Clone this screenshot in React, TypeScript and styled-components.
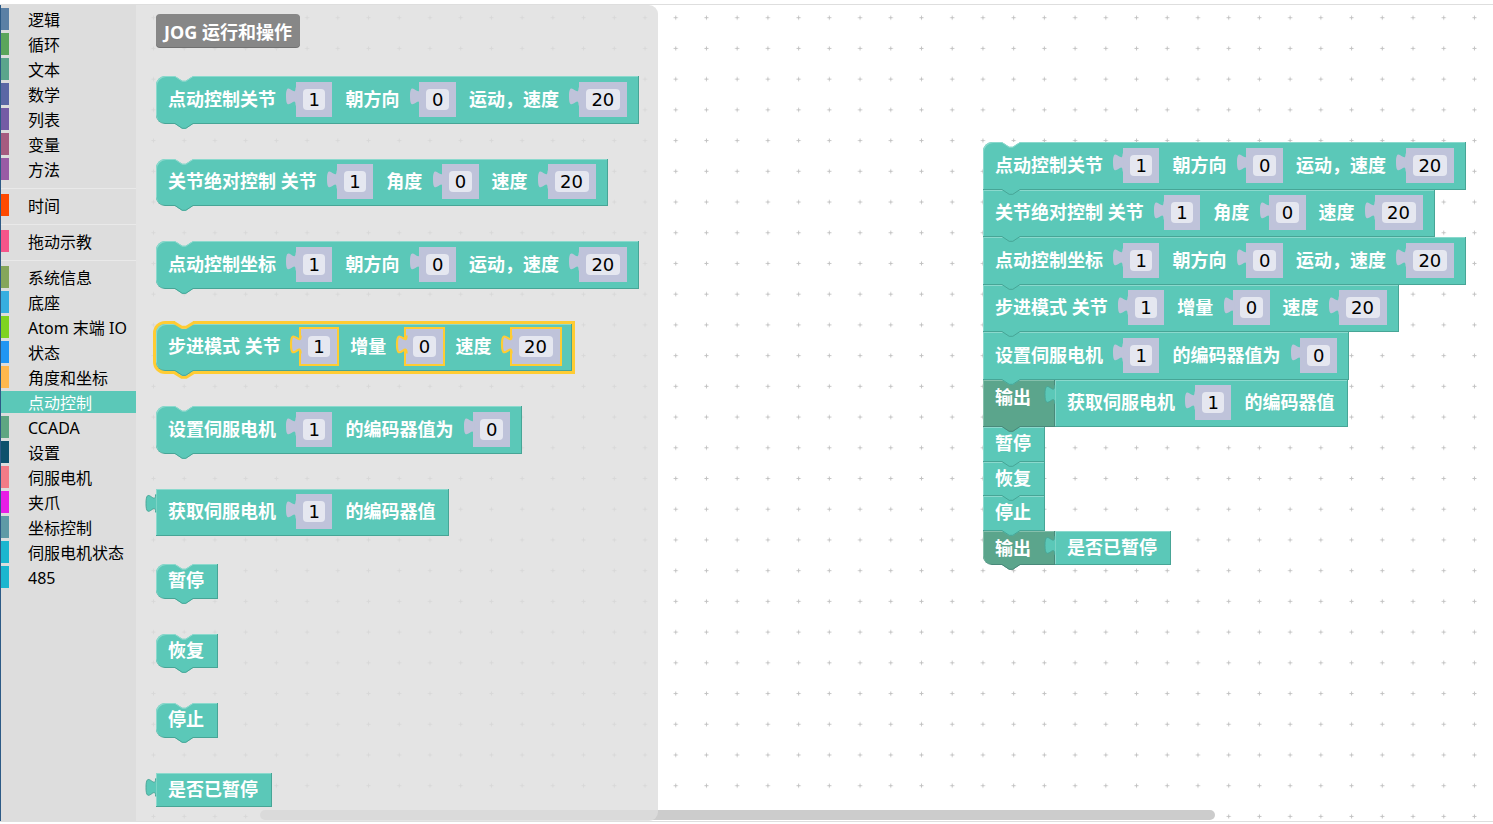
import React from 'react';
import styled, { createGlobalStyle, css } from 'styled-components';

interface Palette {
  fill: string;
  dark: string;
  light: string;
}

const TEAL: Palette = { fill: '#5bc8b8', dark: '#47a596', light: '#8bd9cd' };
const OUT: Palette = { fill: '#5ba58c', dark: '#49897a', light: '#86c0ac' };
const SLOT = '#bfc3da';
const FIELD = '#e5e7f0';
const SELECT = '#fc3';
const FLYOUT_NOTCH = '#e4e4e4';

const GlobalStyle = createGlobalStyle`
  html, body {
    margin: 0;
    padding: 0;
    background: #fff;
    overflow: hidden;
  }
  body {
    font-family: "Noto Sans", "Noto Sans CJK SC", sans-serif;
  }
`;

const Page = styled.div`
  margin-top: 4px;
  height: 816px;
  display: flex;
  border-top: 1px solid #dedede;
  border-bottom: 1px solid #dedede;
`;

/* ---------- toolbox ---------- */

const Toolbox = styled.nav`
  flex: none;
  width: 135px;
  padding-top: 3px;
  display: flex;
  flex-direction: column;
  background: #ddd;
  border-left: 1px solid #2c5a86;
`;

const Category = styled.div<{ $color: string; $selected?: boolean }>`
  flex: none;
  height: 22px;
  margin-bottom: 3px;
  padding-left: 19px;
  border-left: 8px solid ${p => p.$color};
  font-size: 16px;
  line-height: 25px;
  white-space: nowrap;
  color: ${p => (p.$selected ? '#fff' : '#000')};
  background: ${p => (p.$selected ? p.$color : 'transparent')};
`;

const Separator = styled.div`
  flex: none;
  height: 0;
  margin: 5px 0;
  border-bottom: 1px solid #e9e9e9;
`;

type Cat = [string, string, boolean?];
const CATEGORIES: (Cat | null)[] = [
  ['逻辑', '#5b80a5'],
  ['循环', '#5ba55b'],
  ['文本', '#5ba58c'],
  ['数学', '#5b67a5'],
  ['列表', '#745ba5'],
  ['变量', '#a55b80'],
  ['方法', '#995ba5'],
  null,
  ['时间', '#ff4a00'],
  null,
  ['拖动示教', '#f5558a'],
  null,
  ['系统信息', '#85a65b'],
  ['底座', '#36aee0'],
  ['Atom 末端 IO', '#7ed321'],
  ['状态', '#2196f3'],
  ['角度和坐标', '#ffb84d'],
  ['点动控制', '#5bc8b8', true],
  ['CCADA', '#5ea682'],
  ['设置', '#0e516c'],
  ['伺服电机', '#f27b87'],
  ['夹爪', '#e81de6'],
  ['坐标控制', '#5e9aa6'],
  ['伺服电机状态', '#1bb6cf'],
  ['485', '#1bb6cf'],
];

/* ---------- workspace ---------- */

const Workspace = styled.main`
  position: relative;
  flex: 1;
  overflow: hidden;
  background: #fff;
`;

const GridLayer = styled.svg`
  position: absolute;
  inset: 0;
  width: 100%;
  height: 100%;
`;

const HScroll = styled.div`
  position: absolute;
  left: 124px;
  top: 805px;
  width: 955px;
  height: 10px;
  border-radius: 5px;
  background: #ccc;
`;

const Flyout = styled.aside`
  position: absolute;
  left: 0;
  top: 0;
  bottom: 0;
  width: 522px;
  box-sizing: border-box;
  padding: 9px 0 0 20px;
  display: flex;
  flex-direction: column;
  align-items: flex-start;
  gap: 35px;
  background: rgba(221, 221, 221, 0.8);
  border-radius: 0 9px 9px 0;
`;

const FlyoutLabel = styled.div`
  height: 33px;
  margin-bottom: -6px;
  padding: 0 8px;
  display: flex;
  align-items: center;
  border-radius: 4px;
  background: #878787;
  box-shadow: 0 1px 0 #707070;
  color: #fff;
  font-size: 18px;
  font-weight: 700;
  white-space: nowrap;
`;

const Stack = styled.div`
  position: absolute;
  left: 847px;
  top: 137px;
  display: flex;
  flex-direction: column;
  align-items: flex-start;
`;

const Joined = styled.div`
  display: flex;
`;

/* ---------- blocks ---------- */

const BlockBody = styled.div<{
  $h: number;
  $pal: Palette;
  $tl?: boolean;
  $bl?: boolean;
  $sel?: boolean;
  $top?: boolean;
  $socket?: boolean;
  $mt?: number;
}>`
  position: relative;
  flex: none;
  display: flex;
  align-items: ${p => (p.$top ? 'flex-start' : 'center')};
  box-sizing: border-box;
  height: ${p => p.$h}px;
  margin-top: ${p => p.$mt ?? 0}px;
  padding: ${p => (p.$top ? 7 : 0)}px ${p => (p.$socket ? 23 : 13)}px 0 12px;
  background: ${p => p.$pal.fill};
  border-right: 1px solid ${p => p.$pal.dark};
  border-bottom: 1px solid ${p => p.$pal.dark};
  border-radius: ${p => (p.$tl ? 9 : 0)}px 0 0 ${p => (p.$bl ? 9 : 0)}px;
  box-shadow: inset 1px 1px 0 ${p => p.$pal.light}
    ${p => (p.$sel ? `, 0 0 0 3px ${SELECT}` : '')};
  color: #fff;
  font-size: 18px;
  font-weight: 700;
  white-space: nowrap;
`;

const EdgeSvg = styled.svg<{ $bottom?: boolean }>`
  position: absolute;
  left: 19px;
  top: ${p => (p.$bottom ? '100%' : '0')};
  overflow: visible;
  z-index: 1;
`;

const TabSvg = styled.svg<{ $top: number }>`
  position: absolute;
  left: -9.6px;
  top: ${p => p.$top}px;
  overflow: visible;
`;

const Slot = styled.span<{ $sel?: boolean }>`
  position: relative;
  flex: none;
  display: flex;
  align-items: center;
  box-sizing: border-box;
  height: 35px;
  margin-left: 20px;
  padding: 0 7px;
  background: ${SLOT};
  ${p =>
    p.$sel &&
    css`
      box-shadow: 0 0 0 2px ${SELECT};
    `}
  &:last-child {
    margin-right: -2px;
  }
`;

const NumField = styled.span`
  display: block;
  height: 21px;
  padding: 0 5.5px;
  border-radius: 4px;
  background: ${FIELD};
  color: #000;
  font-family: "DejaVu Sans", sans-serif;
  font-size: 18px;
  font-weight: 400;
  line-height: 21px;
`;

const Label = styled.span`
  line-height: 21px;
  ${Slot} + & {
    margin-left: 13px;
  }
`;

function Notch({ bg, pal, sel }: { bg: string; pal: Palette; sel?: boolean }) {
  return (
    <EdgeSvg width="18" height="6" viewBox="0 0 18 6">
      {sel ? (
        <>
          <path d="M0 -3.5 H18 V0 L10.8 4.8 H7.2 L0 0 Z" fill={bg} />
          <path d="M-1 -1.5 L6.7 3.3 H11.3 L19 -1.5" fill="none" stroke={SELECT} strokeWidth="3" />
        </>
      ) : (
        <>
          <path d="M0 0 L7.2 4.8 H10.8 L18 0 Z" fill={bg} />
          <path d="M0 0.5 L7.2 5.3 H10.8 L18 0.5" fill="none" stroke={pal.light} strokeWidth="1" />
        </>
      )}
    </EdgeSvg>
  );
}

function BottomTab({ pal, sel }: { pal: Palette; sel?: boolean }) {
  return (
    <EdgeSvg $bottom width="18" height="6" viewBox="0 0 18 6">
      {sel && <path d="M-1 2.5 L6.7 7.3 H11.3 L19 2.5" fill="none" stroke={SELECT} strokeWidth="3" />}
      <path d="M0 0 H18 V1 L10.8 5.8 H7.2 L0 1 Z" fill={pal.fill} />
      <path d="M0 0.5 L7.2 5.3 H10.8 L18 0.5" fill="none" stroke={pal.dark} strokeWidth="1" />
    </EdgeSvg>
  );
}

function Puzzle({ fill, stroke, width = 1 }: { fill: string; stroke?: string; width?: number }) {
  return (
    <TabSvg $top={3.6} width="9.6" height="22.8" viewBox="0 -2 8 19">
      <path d="M8.6 0 H8 C8 10 0 -8 0 7.5 C0 23 8 5 8 15 H8.6 Z" fill={fill} />
      {stroke && (
        <path d="M8 0 C8 10 0 -8 0 7.5 C0 23 8 5 8 15" fill="none" stroke={stroke} strokeWidth={width} />
      )}
    </TabSvg>
  );
}

type Part = string | number;

function Parts({ parts, sel }: { parts: Part[]; sel?: boolean }) {
  return (
    <>
      {parts.map((p, i) =>
        typeof p === 'number' ? (
          <Slot key={i} $sel={sel}>
            <Puzzle fill={SLOT} stroke={sel ? SELECT : undefined} width={1.8} />
            <NumField>{p}</NumField>
          </Slot>
        ) : (
          <Label key={i}>{p}</Label>
        )
      )}
    </>
  );
}

interface BlockProps {
  h: number;
  pal?: Palette;
  tl?: boolean;
  bl?: boolean;
  notch?: string;
  tab?: boolean;
  output?: boolean;
  sel?: boolean;
  top?: boolean;
  socket?: boolean;
  mt?: number;
  parts: Part[];
}

function Block({ h, pal = TEAL, tl, bl, notch, tab, output, sel, top, socket, mt, parts }: BlockProps) {
  return (
    <BlockBody $h={h} $pal={pal} $tl={tl} $bl={bl} $sel={sel} $top={top} $socket={socket} $mt={mt}>
      {notch && <Notch bg={notch} pal={pal} sel={sel} />}
      {output && <Puzzle fill={pal.fill} stroke={pal.dark} width={0.8} />}
      {tab && <BottomTab pal={pal} sel={sel} />}
      <Parts parts={parts} sel={sel} />
    </BlockBody>
  );
}

const TALL = 47.5;
const SHORT = 34.5;

const JOG: Part[][] = [
  ['点动控制关节', 1, '朝方向', 0, '运动，速度', 20],
  ['关节绝对控制 关节', 1, '角度', 0, '速度', 20],
  ['点动控制坐标', 1, '朝方向', 0, '运动，速度', 20],
  ['步进模式 关节', 1, '增量', 0, '速度', 20],
  ['设置伺服电机', 1, '的编码器值为', 0],
];

const GET_ENCODER: Part[] = ['获取伺服电机', 1, '的编码器值'];
const ACTIONS = ['暂停', '恢复', '停止'];

function Grid() {
  return (
    <GridLayer>
      <defs>
        <pattern id="ws-grid" width="30.72" height="30.72" x="2.14" y="-2.66" patternUnits="userSpaceOnUse">
          <path d="M13.36 15.36 H17.36 M15.36 13.36 V17.36" stroke="#c2c2c2" strokeWidth="1" />
        </pattern>
      </defs>
      <rect width="100%" height="100%" fill="url(#ws-grid)" />
    </GridLayer>
  );
}

export default function App() {
  return (
    <>
      <GlobalStyle />
      <Page>
        <Toolbox>
          {CATEGORIES.map((c, i) =>
            c ? (
              <Category key={i} $color={c[1]} $selected={c[2]}>
                {c[0]}
              </Category>
            ) : (
              <Separator key={i} />
            )
          )}
        </Toolbox>

        <Workspace>
          <Grid />

          <Stack>
            {JOG.map((parts, i) => (
              <Block key={i} h={TALL} tl={i === 0} notch={i === 0 ? '#fff' : undefined} tab parts={parts} />
            ))}
            <Joined>
              <Block h={TALL} pal={OUT} top socket tab parts={['输出']} />
              <Block h={TALL} output parts={GET_ENCODER} />
            </Joined>
            {ACTIONS.map(a => (
              <Block key={a} h={SHORT} tab parts={[a]} />
            ))}
            <Joined>
              <Block h={SHORT} pal={OUT} bl top socket tab parts={['输出']} />
              <Block h={SHORT} output parts={['是否已暂停']} />
            </Joined>
          </Stack>

          <HScroll />

          <Flyout>
            <FlyoutLabel>JOG 运行和操作</FlyoutLabel>
            {JOG.map((parts, i) => (
              <Block key={i} h={TALL} tl bl notch={FLYOUT_NOTCH} tab sel={i === 3} parts={parts} />
            ))}
            <Block h={TALL} output parts={GET_ENCODER} />
            {ACTIONS.map((a, i) => (
              <Block key={a} h={SHORT} tl bl notch={FLYOUT_NOTCH} tab mt={i === 0 ? -7 : 0} parts={[a]} />
            ))}
            <Block h={SHORT} output parts={['是否已暂停']} />
          </Flyout>
        </Workspace>
      </Page>
    </>
  );
}
